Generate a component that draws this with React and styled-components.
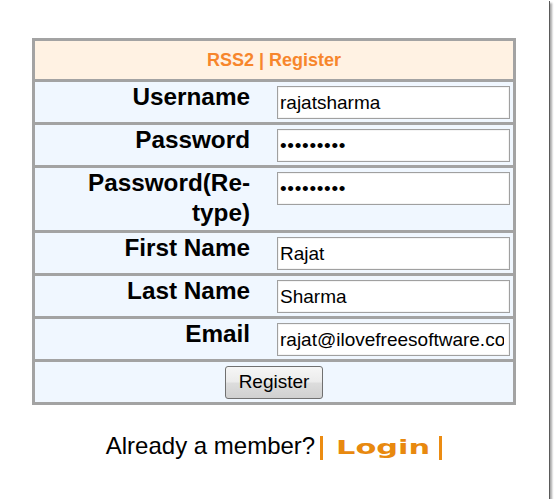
import React from "react"
import styled, { createGlobalStyle } from "styled-components"

/*-----------STYLES ------------*/

const GlobalStyle = createGlobalStyle`
  html, body {
    margin: 0;
    padding: 0;
    background: #ffffff;
  }
  body {
    font-family: "Liberation Sans", Arial, sans-serif;
  }
`

const Frame = styled.div`
  width: 549px;
  height: 499px;
  box-sizing: border-box;
  padding: 38px 0 0 32px;
  background: #ffffff;
  box-shadow: 1px 1px 0 #5a5a5a, 3px 3px 2px rgba(0, 0, 0, 0.35);
`

const FormTable = styled.div`
  width: 484px;
  box-sizing: border-box;
  border: 3px solid #a3a3a3;
  background: #a3a3a3;
  display: grid;
  row-gap: 3px;
`

const Header = styled.div`
  height: 38px;
  background: #fff2e3;
  display: flex;
  align-items: center;
  justify-content: center;
  color: #f7862c;
  font-weight: bold;
  font-size: 18px;
`

const Row = styled.div`
  display: grid;
  grid-template-columns: 1fr 233px;
  column-gap: 27px;
  padding: 4px 3px 3px 0;
  height: ${p => (p.tall ? "55px" : "33px")};
  background: #f0f7ff;
`

const Label = styled.label`
  text-align: right;
  font-weight: bold;
  font-size: 24.3px;
  line-height: 30px;
  color: #000;
  margin: -4px 0 -8px;
`

const Field = styled.input`
  width: 233px;
  height: 33px;
  box-sizing: border-box;
  border: 1px solid #a0a0a0;
  box-shadow: inset 0 0 0 1px #f4f4f4;
  background: #ffffff;
  padding: 0 5px 0 2px;
  margin: 0;
  font-family: "Liberation Sans", Arial, sans-serif;
  font-size: 19px;
  letter-spacing: ${p => (p.type === "password" ? "0.7px" : "0")};
  color: #000;
  outline: none;
`

const ButtonRow = styled.div`
  height: 40px;
  background: #f0f7ff;
  display: flex;
  align-items: center;
  justify-content: center;
`

const Button = styled.button`
  width: 98px;
  height: 33px;
  border: 1px solid #707070;
  border-radius: 3px;
  background: linear-gradient(180deg, #f6f6f6 0%, #ebebeb 49%, #dddddd 51%, #d0d0d0 100%);
  font-family: "Liberation Sans", Arial, sans-serif;
  font-size: 19px;
  color: #000;
  padding: 0;
`

const Footer = styled.div`
  width: 484px;
  margin-top: 27px;
  display: flex;
  justify-content: center;
  align-items: center;
  font-size: 24px;
  color: #000;
`

const LoginLink = styled.a`
  display: inline-flex;
  align-items: center;
  margin-left: 5px;
  color: #e8890f;
  text-decoration: none;
  cursor: pointer;
`

const Bar = styled.span`
  display: inline-block;
  width: 3px;
  height: 24px;
  background: #ec8c12;
  margin-top: 3px;
`

const LoginBox = styled.span`
  display: inline-block;
  width: 90px;
  margin: 0 13px 0 13px;
  overflow: visible;
  white-space: nowrap;
`

const LoginText = styled.span`
  display: inline-block;
  font-family: "DejaVu Sans", Verdana, sans-serif;
  font-weight: bold;
  font-size: 19.5px;
  transform: scaleX(1.56);
  transform-origin: left center;
  margin-top: 1px;
`

/*-----------END STYLES ------------*/

const fields = [
  { label: "Username", type: "text", value: "rajatsharma" },
  { label: "Password", type: "password", value: "123456789" },
  { label: "Password(Re-type)", type: "password", value: "123456789", tall: true },
  { label: "First Name", type: "text", value: "Rajat" },
  { label: "Last Name", type: "text", value: "Sharma" },
  { label: "Email", type: "text", value: "rajat@ilovefreesoftware.com" },
]

export default function App() {
  return (
    <>
      <GlobalStyle />
      <Frame>
        <FormTable>
          <Header>RSS2 | Register</Header>
          {fields.map(f => (
            <Row key={f.label} tall={f.tall}>
              <Label>
                {f.tall ? (
                  <>
                    Password(Re-
                    <br />
                    type)
                  </>
                ) : (
                  f.label
                )}
              </Label>
              <Field type={f.type} defaultValue={f.value} readOnly />
            </Row>
          ))}
          <ButtonRow>
            <Button>Register</Button>
          </ButtonRow>
        </FormTable>
        <Footer>
          Already a member?
          <LoginLink>
            <Bar />
            <LoginBox>
              <LoginText>Login</LoginText>
            </LoginBox>
            <Bar />
          </LoginLink>
        </Footer>
      </Frame>
    </>
  )
}
